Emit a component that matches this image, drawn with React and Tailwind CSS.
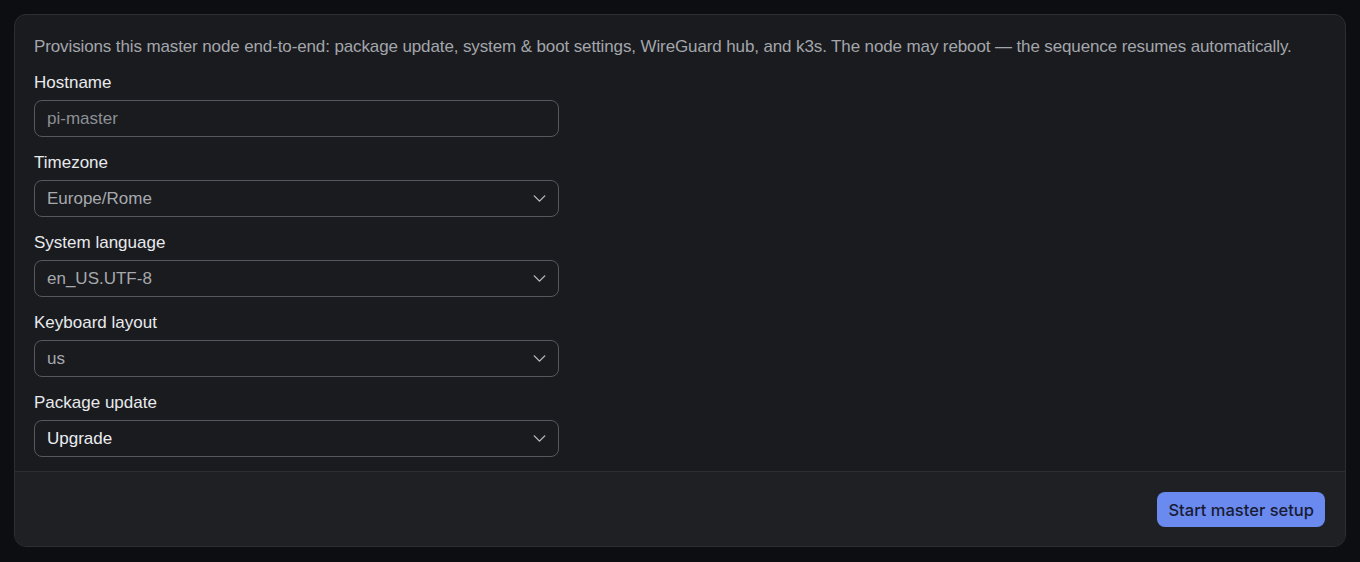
import React, { useState } from 'react';
import { ChevronDown } from 'lucide-react';

const fields = [
  { label: 'Hostname', type: 'input', placeholder: 'pi-master' },
  { label: 'Timezone', type: 'select', value: 'Europe/Rome', options: ['Europe/Rome', 'Europe/London', 'UTC'] },
  { label: 'System language', type: 'select', value: 'en_US.UTF-8', options: ['en_US.UTF-8', 'it_IT.UTF-8'] },
  { label: 'Keyboard layout', type: 'select', value: 'us', options: ['us', 'it', 'de'] },
  { label: 'Package update', type: 'select', value: 'Upgrade', options: ['Upgrade', 'Update only', 'Skip'], strong: true },
];

const SelectBox = ({ value, strong }) => (
  <div className="relative flex h-[37px] w-[525px] items-center rounded-lg border border-[#55585e] bg-[#1a1b1f] pl-3 pr-2">
    <span className={strong ? 'text-[#eceef1]' : 'text-[#a7a9ae]'}>{value}</span>
    <ChevronDown className="ml-auto text-[#b9bbc0]" size={21} strokeWidth={1.6} />
  </div>
);

export default function App() {
  const [hostname, setHostname] = useState('');

  return (
    <div
      className="min-h-[562px] bg-[#0d0e11] p-[14px] text-[17px] leading-[22px]"
      style={{ fontFamily: '"Liberation Sans", Arial, sans-serif' }}
    >
      <div className="overflow-hidden rounded-xl border border-[#2c2e33] bg-[#1a1b1f]">
        <div className="flex flex-col gap-[15px] px-[19px] pt-[21px] pb-[14px]">
          <p className="-mb-px tracking-[-0.12px] text-[#a3a6ab]">
            Provisions this master node end-to-end: package update, system &amp; boot settings, WireGuard hub, and k3s. The node may reboot — the sequence resumes automatically.
          </p>
          {fields.map((f) => (
            <div key={f.label} className="flex flex-col gap-[6px]">
              <label className="text-[#e8eaed]">{f.label}</label>
              {f.type === 'input' ? (
                <input
                  value={hostname}
                  onChange={(e) => setHostname(e.target.value)}
                  placeholder={f.placeholder}
                  className="h-[37px] w-[525px] rounded-lg border border-[#55585e] bg-[#1a1b1f] px-3 text-[#eceef1] outline-none placeholder:text-[#8c8f94]"
                />
              ) : (
                <SelectBox value={f.value} strong={f.strong} />
              )}
            </div>
          ))}
        </div>
        <div className="flex justify-end border-t border-[#2c2e33] bg-[#1f2024] px-5 pt-5 pb-[19px]">
          <button
            className="h-[35px] rounded-lg bg-[#6b8af0] px-[11px] text-[16.5px] font-medium text-[#181c33]"
            style={{ fontFamily: 'Inter, "Liberation Sans", sans-serif' }}
          >
            Start master setup
          </button>
        </div>
      </div>
    </div>
  );
}
